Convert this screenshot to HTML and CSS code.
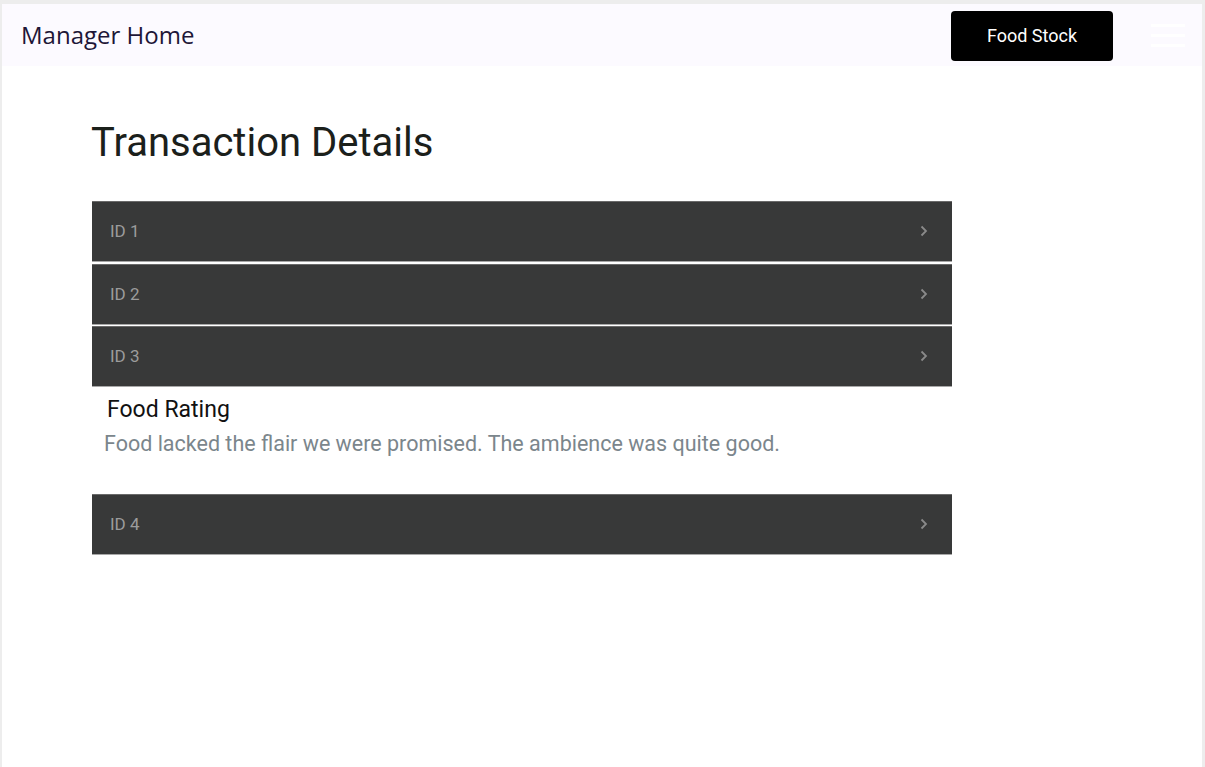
FILE: index.html
```html
<!DOCTYPE html>
<html>
<head>
<meta charset="utf-8">
<link rel="stylesheet" href="styles.css">
</head>
<body>
<div class="frame">
  <header class="topbar">
    <div class="brand">Manager Home</div>
    <div class="actions">
      <button class="stock-btn">Food Stock</button>
      <div class="menu-icon"><span></span><span></span><span></span></div>
    </div>
  </header>
  <main class="content">
    <h1 class="title">Transaction Details</h1>
    <div class="list">
      <div class="row"><span class="row-label">ID 1</span><svg class="chev" width="8" height="12" viewBox="0 0 8 12"><path d="M1.5 1.5 L6 6 L1.5 10.5" fill="none" stroke="#8a8a8a" stroke-width="1.8"/></svg></div>
      <div class="row"><span class="row-label">ID 2</span><svg class="chev" width="8" height="12" viewBox="0 0 8 12"><path d="M1.5 1.5 L6 6 L1.5 10.5" fill="none" stroke="#8a8a8a" stroke-width="1.8"/></svg></div>
      <div class="row"><span class="row-label">ID 3</span><svg class="chev" width="8" height="12" viewBox="0 0 8 12"><path d="M1.5 1.5 L6 6 L1.5 10.5" fill="none" stroke="#8a8a8a" stroke-width="1.8"/></svg></div>
      <div class="detail">
        <div class="detail-title">Food Rating</div>
        <p class="detail-text">Food lacked the flair we were promised. The ambience was quite good.</p>
      </div>
      <div class="row"><span class="row-label">ID 4</span><svg class="chev" width="8" height="12" viewBox="0 0 8 12"><path d="M1.5 1.5 L6 6 L1.5 10.5" fill="none" stroke="#8a8a8a" stroke-width="1.8"/></svg></div>
    </div>
  </main>
</div>
</body>
</html>
```

FILE: styles.css
```css
html, body {
  margin: 0;
  padding: 0;
  height: 100%;
}
body {
  background: #ededed;
  padding: 4px 3px 0 2px;
  box-sizing: border-box;
  font-family: Roboto, "Liberation Sans", sans-serif;
}
.frame {
  background: #ffffff;
  min-height: 100%;
}
.topbar {
  height: 62px;
  background: #fcfaff;
  display: flex;
  align-items: center;
  justify-content: space-between;
  padding: 0 17px 0 19px;
}
.brand {
  font-family: "Open Sans", sans-serif;
  font-size: 24px;
  color: #1e1637;
  margin-top: -2px;
}
.actions {
  display: flex;
  align-items: center;
  gap: 38px;
}
.stock-btn {
  width: 162px;
  height: 50px;
  background: #000;
  color: #fff;
  border: none;
  border-radius: 4px;
  font-family: Roboto, sans-serif;
  font-size: 18px;
  margin-top: 1px;
}
.menu-icon {
  width: 34px;
  display: flex;
  flex-direction: column;
  gap: 7px;
}
.menu-icon span {
  display: block;
  height: 3px;
  background: #ffffff;
}
.content {
  padding: 52px 0 0 89px;
}
.title {
  margin: 0 0 33px 0;
  font-weight: 400;
  font-size: 40px;
  color: #1b201b;
  line-height: 50px;
}
.list {
  width: 860px;
  margin-left: 1px;
}
.row {
  height: 61px;
  background: #383939;
  border-top: 1px solid #6a6a6a;
  border-bottom: 1px solid #a8a8a8;
  box-sizing: border-box;
  display: flex;
  align-items: center;
  justify-content: space-between;
  padding: 0 24px 0 18px;
  margin-bottom: 1.5px;
}
.row-label {
  color: #9c9c9c;
  font-size: 17px;
  margin-top: -1px;
}
.chev {
  margin-top: -1px;
}
.detail {
  padding: 9px 0 0 12px;
  height: 107px;
  box-sizing: border-box;
  margin-top: -1.5px;
}
.detail-title {
  font-size: 23px;
  color: #111;
  padding-left: 3px;
  line-height: 28px;
}
.detail-text {
  margin: 6px 0 0 0;
  font-size: 21.5px;
  color: #7b868c;
  line-height: 28px;
}
```
